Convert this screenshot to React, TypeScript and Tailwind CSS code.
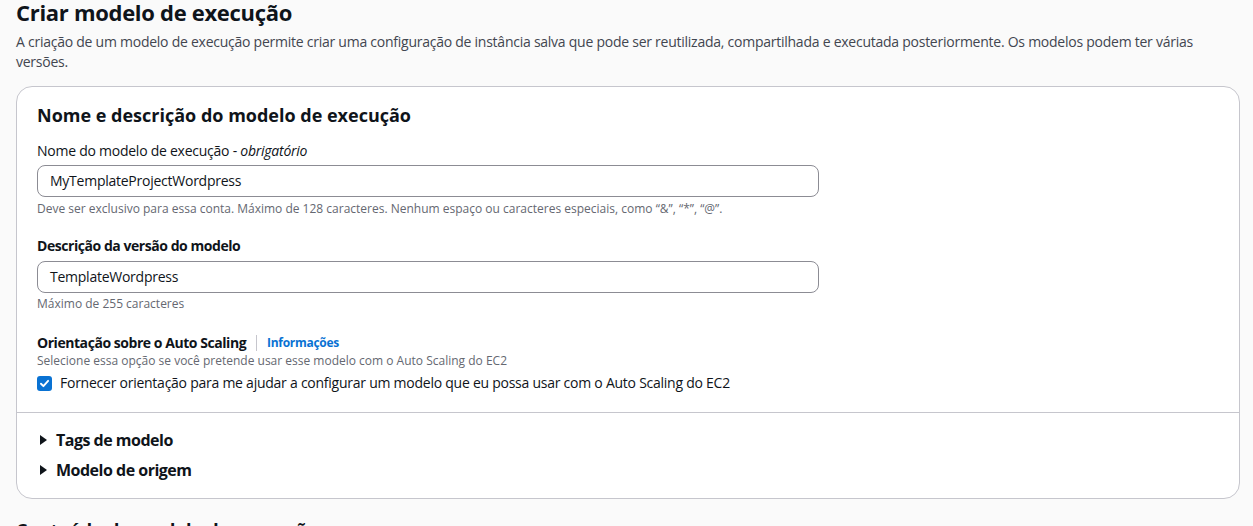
import React from "react";

const font = { fontFamily: '"Open Sans", "Noto Sans", sans-serif' };

function Caret() {
  return (
    <svg width="7" height="10" viewBox="0 0 7 10" className="shrink-0">
      <path d="M0 0 L7 5 L0 10 Z" fill="#0f141a" />
    </svg>
  );
}

function Expandable({ label }: { label: string }) {
  return (
    <div className="ml-[3px] flex h-[22px] items-center gap-[9px]">
      <Caret />
      <span className="text-base font-bold leading-[22px] tracking-[-0.5px] text-[#0f141a]">{label}</span>
    </div>
  );
}

export default function App() {
  return (
    <div className="min-h-screen bg-[#fafafa] pl-4 pr-[13px] text-[#0f141a]" style={font}>
      <h1 className="-mt-[3px] text-[22px] font-bold leading-[30px] tracking-[-0.3px]">Criar modelo de execução</h1>
      <p className="mt-[5px] text-sm leading-5 tracking-[-0.25px] text-[#424650]">
        A criação de um modelo de execução permite criar uma configuração de instância salva que pode ser reutilizada, compartilhada e executada posteriormente. Os modelos podem ter várias versões.
      </p>

      <section className="mt-[14px] rounded-2xl border border-[#c6c6cd] bg-white">
        <div className="px-5 pt-4 pb-[19px]">
          <h2 className="text-lg font-bold leading-6">Nome e descrição do modelo de execução</h2>

          <label className="mt-[14px] block text-sm leading-5 tracking-[-0.25px]">
            Nome do modelo de execução - <i>obrigatório</i>
          </label>
          <div className="mt-1 flex h-8 w-[782px] items-center rounded-lg border border-[#8c8c94] px-3 text-sm tracking-[-0.25px]">
            MyTemplateProjectWordpress
          </div>
          <p className="mt-1 text-xs leading-4 text-[#656871]">
            Deve ser exclusivo para essa conta. Máximo de 128 caracteres. Nenhum espaço ou caracteres especiais, como “&”, “*”, “@”.
          </p>

          <label className="mt-[19px] block text-sm font-bold leading-5 tracking-[-0.45px]">Descrição da versão do modelo</label>
          <div className="mt-[5px] flex h-8 w-[782px] items-center rounded-lg border border-[#8c8c94] px-3 text-sm tracking-[-0.25px]">
            TemplateWordpress
          </div>
          <p className="mt-[3px] text-xs leading-4 text-[#656871]">Máximo de 255 caracteres</p>

          <div className="mt-[21px] flex items-center leading-[18px]">
            <span className="text-sm font-bold tracking-[-0.45px]">Orientação sobre o Auto Scaling</span>
            <span className="mx-[10px] h-4 w-px bg-[#c6c6cd]" />
            <span className="text-xs font-bold tracking-[-0.3px] text-[#0972d3]">Informações</span>
          </div>
          <p className="text-xs leading-4 text-[#656871]">
            Selecione essa opção se você pretende usar esse modelo com o Auto Scaling do EC2
          </p>
          <div className="mt-1 flex items-center gap-2">
            <span className="flex h-[15px] w-[15px] items-center justify-center rounded-[3px] bg-[#0972d3]">
              <svg width="11" height="11" viewBox="0 0 10 10">
                <path d="M1.8 5.2 L4 7.4 L8.3 2.6" stroke="#fff" strokeWidth="1.7" fill="none" strokeLinecap="round" strokeLinejoin="round" />
              </svg>
            </span>
            <span className="text-sm leading-5 tracking-[-0.25px]">
              Fornecer orientação para me ajudar a configurar um modelo que eu possa usar com o Auto Scaling do EC2
            </span>
          </div>
        </div>

        <div className="flex flex-col gap-2 border-t border-[#c6c6cd] px-5 pt-4 pb-[17px]">
          <Expandable label="Tags de modelo" />
          <Expandable label="Modelo de origem" />
        </div>
      </section>

      <h2 className="mt-[19px] text-lg font-bold leading-6">Conteúdo do modelo de execução</h2>
    </div>
  );
}
